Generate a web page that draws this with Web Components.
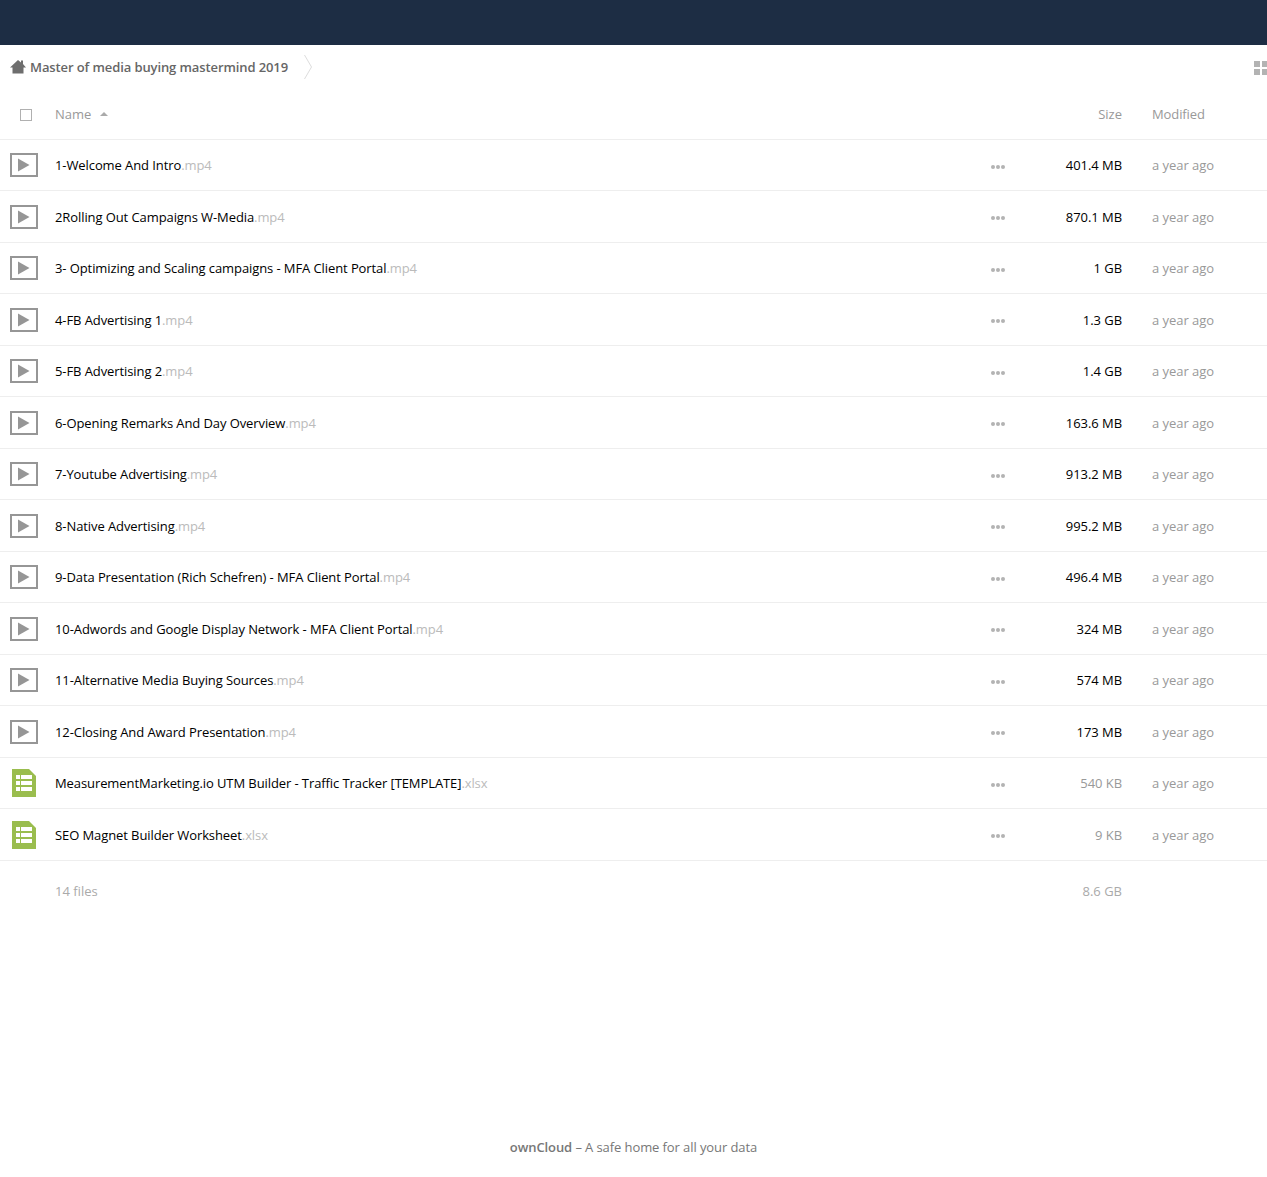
<!DOCTYPE html>
<html>
<head>
<meta charset="utf-8">
<title>ownCloud</title>
<style>
html,body{margin:0;padding:0;background:#fff;}
body{font:13px "Open Sans","Liberation Sans",sans-serif;color:#000;}
</style>
</head>
<body>
<files-app></files-app>
<script>
const ICONS = {
    video: `<svg width="28" height="24" viewBox="0 0 28 24"><rect x="1" y="1" width="26" height="22" fill="#fff" stroke="#969696" stroke-width="2"/><path d="M8 5.5L19.5 12L8 18.5z" fill="#969696"/></svg>`,
    sheet: `<svg width="24" height="28" viewBox="0 0 24 28"><path d="M0 0H17L24 7V28H0z" fill="#9abd4e"/><path d="M4 6H8V10H4zM9 6H20V10H9zM4 12H8V16H4zM9 12H20V16H9zM4 18H8V22H4zM9 18H20V22H9z" fill="#fff"/></svg>`
};

class TopBar extends HTMLElement{
    constructor(){
        super();
        this.attachShadow({mode:'open'});
        this.shadowRoot.innerHTML = `
        <style>
            :host{display:block;height:45px;background:#1d2d44;}
        </style>`;
    }
}

class CrumbBar extends HTMLElement{
    constructor(){
        super();
        this.attachShadow({mode:'open'});
        this.shadowRoot.innerHTML = `
        <style>
            :host{display:flex;align-items:center;height:44px;color:#555;overflow:hidden;}
            .home{margin-left:10px;width:16px;height:16px;display:block;}
            .label{margin-left:4px;font-weight:600;color:#666;letter-spacing:-.1px;white-space:nowrap;}
            .sep{margin-left:15px;display:block;}
            .view{margin-left:auto;display:block;width:14px;height:14px;margin-right:-1px;position:relative;top:1px;}
        </style>
        <svg class="home" viewBox="0 0 16 16"><path d="M8 1L11 3.4V1.5H13V5L16 8.5H13.5V14.5H2.5V8.5H0z" fill="#6e6e6e"/></svg>
        <span class="label"><slot></slot></span>
        <svg class="sep" width="10" height="26" viewBox="0 0 10 26"><path d="M1.5 1L8.5 13L1.5 25" fill="none" stroke="#ddd"/></svg>
        <svg class="view" viewBox="0 0 14 14"><path d="M0 0H6V6H0zM8 0H14V6H8zM0 8H6V14H0zM8 8H14V14H8z" fill="#b3b3b3"/></svg>`;
    }
}

class ListHead extends HTMLElement{
    constructor(){
        super();
        this.attachShadow({mode:'open'});
        this.shadowRoot.innerHTML = `
        <style>
            :host{display:flex;align-items:center;height:50.5px;box-sizing:border-box;border-bottom:1px solid #eee;color:#999;padding-top:1px;}
            .check{width:55px;display:flex;justify-content:center;box-sizing:border-box;padding:2px 3px 0 0;}
            .box{width:10px;height:10px;border:1px solid #b0b0b0;background:#fff;}
            .name{flex:1;display:flex;align-items:center;}
            .arrow{margin-left:9px;width:0;height:0;border-left:4px solid transparent;border-right:4px solid transparent;border-bottom:4px solid #aaa;}
            .size{text-align:right;}
            .mod{width:145px;padding-left:30px;box-sizing:border-box;letter-spacing:-.1px;}
        </style>
        <div class="check"><div class="box"></div></div>
        <div class="name">Name<span class="arrow"></span></div>
        <div class="size">Size</div>
        <div class="mod">Modified</div>`;
    }
}

class FileRow extends HTMLElement{
    constructor(){
        super();
        this.attachShadow({mode:'open'});
    }
    connectedCallback(){
        const kind = this.getAttribute('kind') || 'video';
        const ext = this.getAttribute('ext') || '';
        const size = this.getAttribute('size') || '';
        const small = this.hasAttribute('small');
        this.shadowRoot.innerHTML = `
        <style>
            :host{display:flex;align-items:center;height:51.5px;box-sizing:border-box;border-bottom:1px solid #eee;padding-top:1px;}
            .icon{width:55px;display:flex;padding-left:${kind === 'video' ? 10 : 12}px;box-sizing:border-box;}
            .icon svg{display:block;}
            .name{flex:1;white-space:nowrap;color:#000;letter-spacing:-.09px;}
            .ext{color:#bbb;}
            .more{width:14px;display:flex;gap:1px;align-items:center;position:relative;top:1.5px;}
            .more i{width:4px;height:4px;border-radius:50%;background:#b3b3b3;display:block;}
            .size{width:117px;text-align:right;letter-spacing:-.05px;color:${small ? '#999' : '#000'};}
            .mod{width:145px;padding-left:30px;box-sizing:border-box;color:#999;letter-spacing:-.03px;}
        </style>
        <div class="icon">${ICONS[kind]}</div>
        <div class="name"><slot></slot><span class="ext">${ext}</span></div>
        <div class="more"><i></i><i></i><i></i></div>
        <div class="size">${size}</div>
        <div class="mod">a year ago</div>`;
    }
}

class ListSummary extends HTMLElement{
    constructor(){
        super();
        this.attachShadow({mode:'open'});
        this.shadowRoot.innerHTML = `
        <style>
            :host{display:flex;align-items:center;height:60px;color:#aaa;}
            .name{flex:1;padding-left:55px;}
            .size{width:70px;text-align:right;}
            .mod{width:145px;}
        </style>
        <div class="name"><slot name="count"></slot></div>
        <div class="size"><slot name="total"></slot></div>
        <div class="mod"></div>`;
    }
}

class PageFooter extends HTMLElement{
    constructor(){
        super();
        this.attachShadow({mode:'open'});
        this.shadowRoot.innerHTML = `
        <style>
            :host{display:block;text-align:center;color:#777;margin-top:216.5px;height:30px;line-height:20px;letter-spacing:-.09px;}
            b{font-weight:600;}
        </style>
        <b>ownCloud</b> – A safe home for all your data`;
    }
}

const FILES = [
    ['video','1-Welcome And Intro','.mp4','401.4 MB'],
    ['video','2Rolling Out Campaigns W-Media','.mp4','870.1 MB'],
    ['video','3- Optimizing and Scaling campaigns - MFA Client Portal','.mp4','1 GB'],
    ['video','4-FB Advertising 1','.mp4','1.3 GB'],
    ['video','5-FB Advertising 2','.mp4','1.4 GB'],
    ['video','6-Opening Remarks And Day Overview','.mp4','163.6 MB'],
    ['video','7-Youtube Advertising','.mp4','913.2 MB'],
    ['video','8-Native Advertising','.mp4','995.2 MB'],
    ['video','9-Data Presentation (Rich Schefren) - MFA Client Portal','.mp4','496.4 MB'],
    ['video','10-Adwords and Google Display Network - MFA Client Portal','.mp4','324 MB'],
    ['video','11-Alternative Media Buying Sources','.mp4','574 MB'],
    ['video','12-Closing And Award Presentation','.mp4','173 MB'],
    ['sheet','MeasurementMarketing.io UTM Builder - Traffic Tracker [TEMPLATE]','.xlsx','540 KB',true],
    ['sheet','SEO Magnet Builder Worksheet','.xlsx','9 KB',true]
];

class FilesApp extends HTMLElement{
    constructor(){
        super();
        this.attachShadow({mode:'open'});
        const rows = FILES.map(f =>
            `<file-row kind="${f[0]}" ext="${f[2]}" size="${f[3]}"${f[4] ? ' small' : ''}>${f[1]}</file-row>`
        ).join('');
        this.shadowRoot.innerHTML = `
        <style>
            :host{display:block;}
        </style>
        <top-bar></top-bar>
        <crumb-bar>Master of media buying mastermind 2019</crumb-bar>
        <list-head></list-head>
        ${rows}
        <list-summary><span slot="count">14 files</span><span slot="total">8.6 GB</span></list-summary>
        <page-footer></page-footer>`;
    }
}

customElements.define('top-bar',TopBar);
customElements.define('crumb-bar',CrumbBar);
customElements.define('list-head',ListHead);
customElements.define('file-row',FileRow);
customElements.define('list-summary',ListSummary);
customElements.define('page-footer',PageFooter);
customElements.define('files-app',FilesApp);
</script>
</body>
</html>
